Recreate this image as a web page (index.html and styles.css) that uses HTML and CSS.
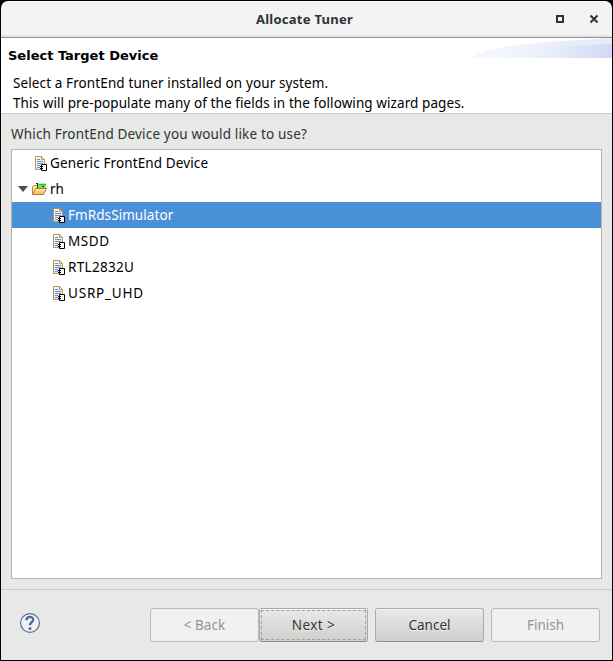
FILE: index.html
```html
<!DOCTYPE html>
<html lang="en">
<head>
<meta charset="utf-8">
<title>Allocate Tuner</title>
<link rel="stylesheet" href="styles.css">
</head>
<body>
<svg class="defs" width="0" height="0" aria-hidden="true">
  <defs>
    <linearGradient id="paper" x2="1" y2="1"><stop stop-color="#fff"/><stop offset="1" stop-color="#d3e2f5"/></linearGradient>
    <linearGradient id="gold" x2="0" y2="1"><stop stop-color="#fff0bd"/><stop offset="1" stop-color="#edb64e"/></linearGradient>
    <linearGradient id="swoosh"><stop stop-color="#fbfcff"/><stop offset=".5" stop-color="#ebeffa"/><stop offset="1" stop-color="#d0daf4"/></linearGradient>
    <linearGradient id="glow"><stop stop-color="#f4f7fd"/><stop offset="1" stop-color="#e4eaf9"/></linearGradient>
    <symbol id="device" viewBox="0 0 16 16">
      <path d="M2.500 1.500h6l3 3v10h-9z" fill="url(#paper)"/>
      <path d="M2.500 15V1.500h6.200" fill="none" stroke="#b59345"/>
      <path d="M2 14.500h6M11.500 9V4.500l-3-3v3h3" fill="none" stroke="#bd9a4d"/>
      <path d="M4 4.500h3M4 6.500h6M4 8.500h6M4 10.500h3M4 12.500h3" stroke="#6a8dbd"/>
      <path d="M8.500 9.500h5v6h-5z" fill="#fff" stroke="#000"/>
      <path d="M7 11.500h3M7 13.500h3" stroke="#000"/>
    </symbol>
  </defs>
</svg>
<div class="window">
  <header class="titlebar">
    <h1><span class="t-title">Allocate Tuner</span></h1>
    <svg class="controls" width="42" height="12" viewBox="0 0 42 12">
      <path d="M2 3h6v6H2z" fill="none" stroke="#2e3436" stroke-width="2"/>
      <path d="m35.500 2.500 7 7m0-7-7 7" fill="none" stroke="#2e3436" stroke-width="2"/>
    </svg>
  </header>
  <section class="banner">
    <svg class="swoosh" width="141" height="20" viewBox="0 0 141 20">
      <path d="M0 20C20 6 75 4 141 0v20z" fill="url(#glow)"/>
      <path d="M0 20C42 12 82 8 141 6v14z" fill="url(#swoosh)"/>
    </svg>
    <h2><span class="t-head">Select Target Device</span></h2>
    <p><span class="t-d1">Select a FrontEnd tuner installed on your system.</span><br><span class="t-d2">This will pre-populate many of the fields in the following wizard pages.</span></p>
  </section>
  <main>
    <label><span class="t-ask">Which FrontEnd Device you would like to use?</span></label>
    <ul class="tree">
      <li class="root"><svg class="icon"><use href="#device"/></svg><span class="t-gen">Generic FrontEnd Device</span></li>
      <li class="folder">
        <svg class="arrow" width="10" height="6"><path d="M0 0h10L5 6z" fill="#4b4f50"/></svg>
        <svg class="icon" viewBox="0 0 16 16">
          <path d="M6 2.500h9v5H6z" fill="#7fe04f"/>
          <path d="M8 3.500h7" stroke="#37a956"/>
          <path d="M1.500 13V5.500l1-1h3l1 1v3" fill="#ffe9a8" stroke="#c28a35"/>
          <path d="M5 2.500h2M6.500 3v4M11 5.500h2" stroke="#173c20" fill="none"/>
          <path d="m1.500 13.500 3-6h11l-3 6z" fill="url(#gold)" stroke="#b8782a" stroke-linejoin="round"/>
        </svg>
        <span class="t-rh">rh</span>
      </li>
      <li class="child selected"><svg class="icon"><use href="#device"/></svg><span class="t-fm">FmRdsSimulator</span></li>
      <li class="child"><svg class="icon"><use href="#device"/></svg><span class="t-ms">MSDD</span></li>
      <li class="child"><svg class="icon"><use href="#device"/></svg><span class="t-rtl">RTL2832U</span></li>
      <li class="child"><svg class="icon"><use href="#device"/></svg><span class="t-us">USRP_UHD</span></li>
    </ul>
  </main>
  <footer>
    <svg class="help" width="22" height="22" viewBox="0 0 22 22">
      <circle cx="11" cy="11" r="9.400" fill="#f1f2f4" stroke="#596d91" stroke-width="1.200"/>
      <path d="M7.500 8.200C7.600 3.600 14.500 4 14.200 7.900 14 10.300 11 10.200 11 13.200" fill="none" stroke="#526a97" stroke-width="2.400"/>
      <circle cx="11" cy="16.500" r="1.500" fill="#526a97"/>
    </svg>
    <div class="pair">
      <button class="disabled" disabled><span class="t-back">&lt; Back</span></button>
      <button class="focused"><span class="t-next">Next &gt;</span></button>
    </div>
    <button><span class="t-cancel">Cancel</span></button>
    <button class="disabled" disabled><span class="t-finish">Finish</span></button>
  </footer>
</div>
</body>
</html>
```
FILE: styles.css
```css
* { box-sizing: border-box; }
body { margin: 0; background: #000; font: 13.5px "Noto Sans", sans-serif; color: #000; }
.defs { position: absolute; }
.window {
  width: 613px; height: 661px; padding: 1px; overflow: hidden;
  display: flex; flex-direction: column;
}
span { white-space: nowrap; }
.titlebar {
  position: relative; height: 37px; flex: none;
  display: flex; align-items: center; justify-content: center;
  background: linear-gradient(#fff 0, #f3f3f3 2px, #f3f3f3 33px, #dedede 36px);
  border-bottom: 1px solid #919191; border-radius: 7px 7px 0 0;
}
h1 { margin: 0 4px 0 0; font-size: 13px; line-height: 20px; color: #2e3436; }
.controls { position: absolute; right: 15px; top: 12px; overflow: visible; }
.banner {
  position: relative; height: 76px; flex: none; padding: 9px 7px 0;
  background: #fff; border-bottom: 1px solid #c9c9c7;
}
.swoosh { position: absolute; right: 0; top: 0; }
h2 { margin: 0; font: bold 13px/18px "DejaVu Sans", sans-serif; }
p { margin: 8px 0 0 5px; line-height: 20px; }
main { flex: 1; background: #e8e8e6; padding: 10px 10px; display: flex; flex-direction: column; }
label { line-height: 20px; margin-bottom: 5px; color: #2e3436; }
.tree {
  flex: 1; margin: 0; padding: 0; list-style: none;
  background: #fff; border: 1px solid #b4b4b0;
}
li { height: 26px; display: flex; align-items: center; line-height: 26px; }
.icon { width: 16px; height: 16px; flex: none; margin-right: 1px; }
.root { padding-left: 21px; }
.child { padding-left: 39px; }
.folder { padding-left: 6px; }
.arrow { margin-right: 3px; }
.folder .icon { margin-right: 3px; }
.selected { background: #4a90d9; color: #fff; }
.t-title { letter-spacing: .26px; }
.t-d1 { letter-spacing: .11px; }
.t-d2 { letter-spacing: .085px; }
.t-ask { letter-spacing: .165px; }
.t-gen { letter-spacing: .12px; }
.t-fm { letter-spacing: .07px; }
.t-ms { letter-spacing: .6px; }
.t-rtl { letter-spacing: .3px; }
.t-us { letter-spacing: .8px; }
.t-next { letter-spacing: .4px; }
footer {
  height: 71px; flex: none; padding: 0 12px 0 18px;
  display: flex; align-items: center; gap: 7px;
  background: #e8e8e6; border-top: 1px solid #cbcbc9;
}
.help { margin-right: auto; margin-bottom: 5px; }
.pair { display: flex; }
button {
  width: 109px; height: 34px; padding: 0 0 1px; position: relative;
  font: inherit; color: #2e3436;
  background: linear-gradient(#e9e9e7, #cfcfcd);
  border: 1px solid #aaaaa6; border-bottom-color: #8d8d89; border-radius: 3px;
  box-shadow: inset 0 1px #f7f7f6; text-shadow: 0 1px #fff9;
}
.disabled { background: #f1f1f1; color: #919494; border-color: #b9b9b6; box-shadow: none; text-shadow: none; }
.focused::after { content: ""; position: absolute; inset: 1px; border: 1px dashed #a0a09d; border-radius: 1px; }
```
